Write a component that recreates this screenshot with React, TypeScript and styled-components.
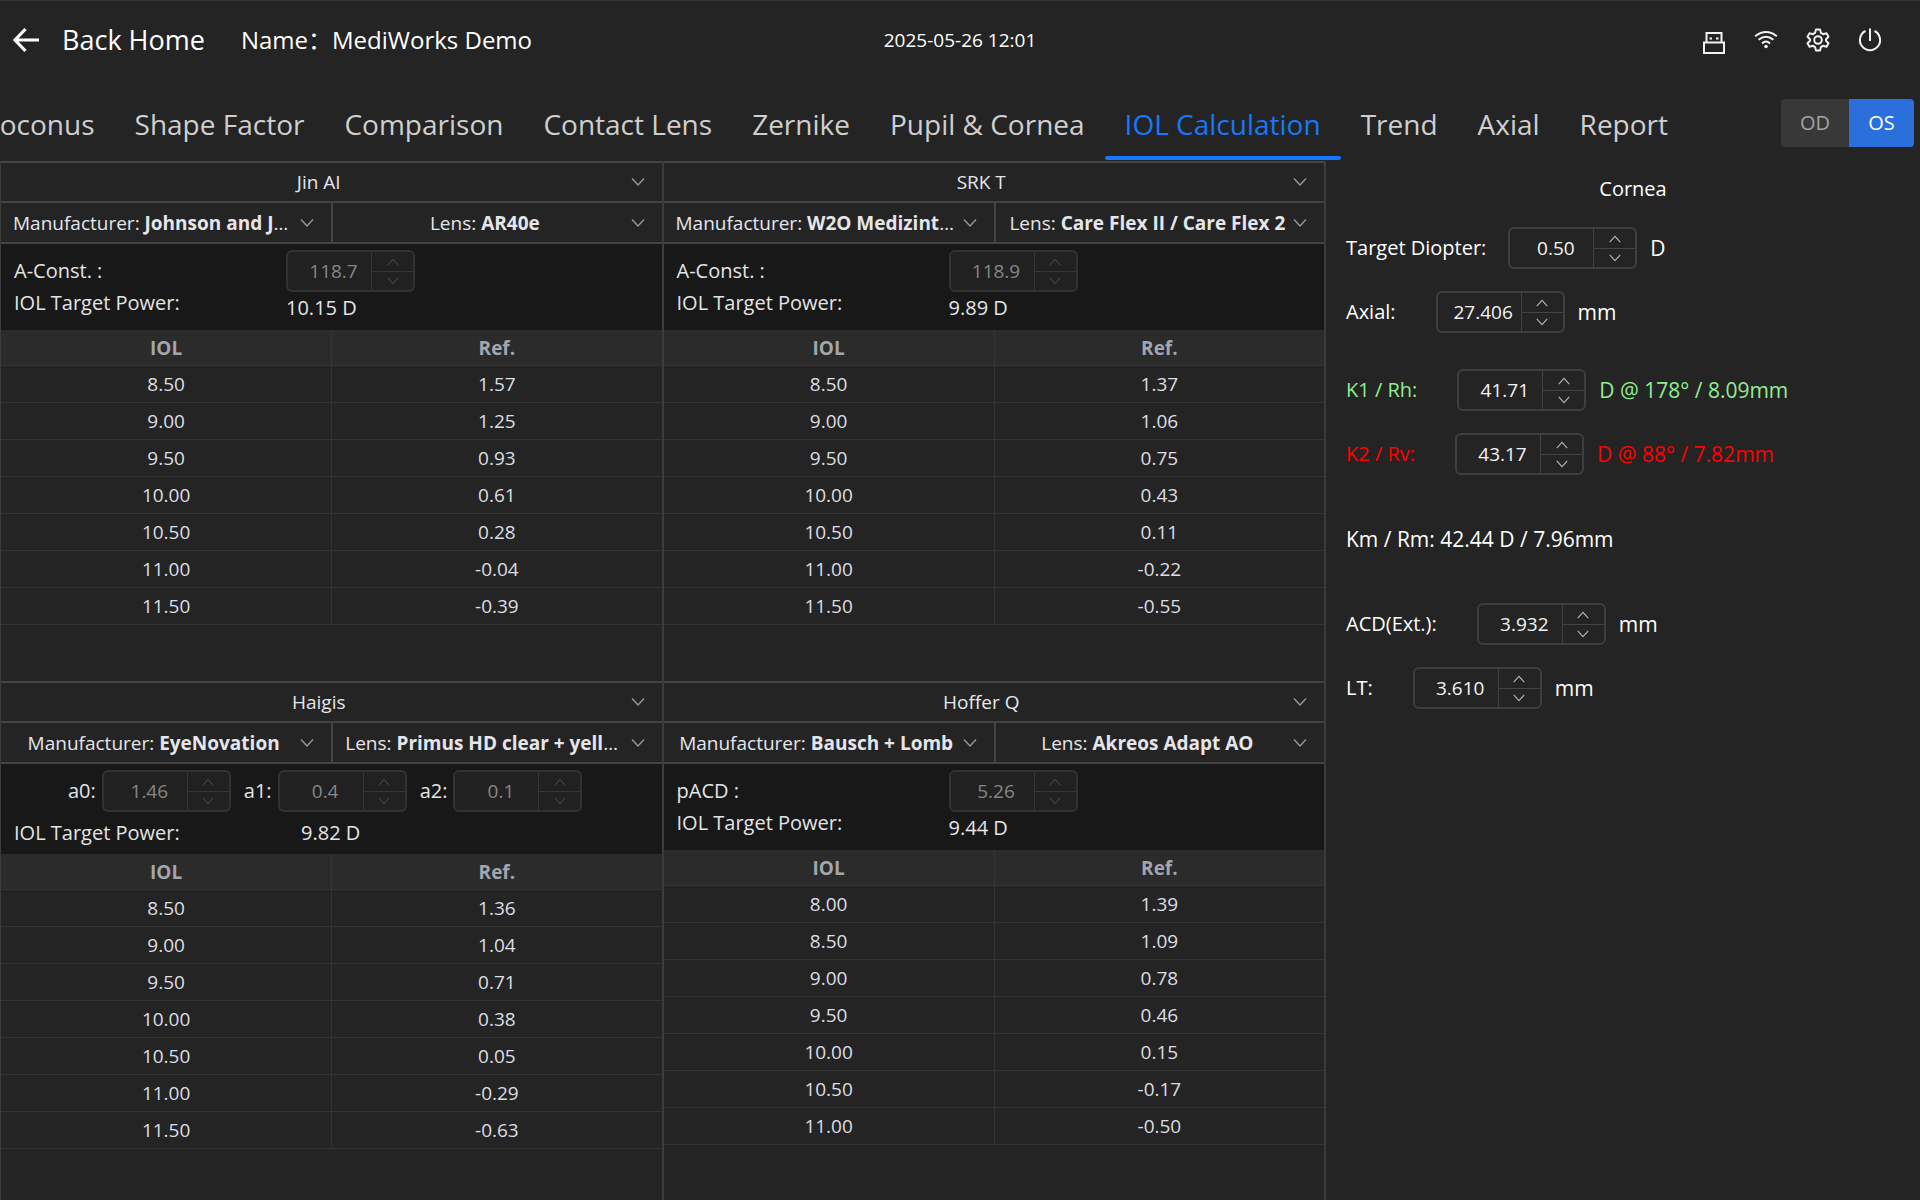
import React from 'react';
import styled, { createGlobalStyle } from 'styled-components';

const Global = createGlobalStyle`
  *, *::before, *::after { box-sizing: border-box; }
  body {
    margin: 0;
    background: #242424;
    color: #fff;
    font-family: "Open Sans", "Noto Sans CJK SC", sans-serif;
    font-size: 20px;
    line-height: 28px;
  }
  button, input, select { font: inherit; color: inherit; margin: 0; }
`;

const Page = styled.div`
  display: flex;
  flex-direction: column;
  min-height: 100vh;
  border-top: 1px solid #363636;
`;

const TopBar = styled.header`
  display: grid;
  grid-template-columns: minmax(0, 1fr) auto minmax(0, 1fr);
  align-items: center;
  height: 80px;
  padding-bottom: 2px;
`;

const TopLeft = styled.div`
  display: flex;
  align-items: center;
  gap: 36px;
  padding-left: 12px;
  font-size: 24px;
`;

const BackLink = styled.a`
  display: flex;
  align-items: center;
  gap: 22px;
  color: #fff;
  font-size: 27px;
  text-decoration: none;
`;

const Clock = styled.time`
  font-size: 19px;
`;

const TopIcons = styled.div`
  display: flex;
  justify-content: flex-end;
  gap: 24px;
  padding-right: 36px;
`;

const IconButton = styled.button`
  display: flex;
  padding: 0;
  border: 0;
  background: none;
  color: #f2f2f2;
`;

const TabRow = styled.div`
  display: flex;
  align-items: center;
  justify-content: space-between;
  height: 80px;
  padding-right: 6px;
`;

const Tabs = styled.nav`
  display: flex;
  justify-content: flex-end;
  flex: 0 1 1688px;
  min-width: 0;
  height: 80px;
  overflow: hidden;
`;

const Tab = styled.button<{ $active?: boolean }>`
  flex: none;
  height: 80px;
  padding: 6px 20px 0;
  border: 0;
  border-radius: 0;
  background: none;
  position: relative;
  color: ${p => (p.$active ? '#1677ff' : '#cfcfcf')};
  font-size: 28px;
  &::after {
    content: '';
    display: ${p => (p.$active ? 'block' : 'none')};
    position: absolute;
    left: 0;
    right: 0;
    bottom: 1px;
    height: 4px;
    border-radius: 2px;
    background: #1677ff;
  }
`;

const EyeSwitch = styled.div`
  display: flex;
  height: 48px;
  margin-top: 4px;
  border-radius: 4px;
  overflow: hidden;
`;

const EyeButton = styled.button<{ $active?: boolean }>`
  width: ${p => (p.$active ? 65 : 68)}px;
  padding: 0;
  border: 0;
  background: ${p => (p.$active ? '#2b6fdc' : '#383838')};
  color: ${p => (p.$active ? '#fff' : '#a3a3a3')};
`;

const Main = styled.main`
  flex: 1;
  display: grid;
  grid-template-columns: 1326fr 594fr;
`;

const Quadrants = styled.div`
  display: grid;
  grid-template-columns: 1fr 1fr;
  grid-template-rows: 520px 1fr;
  border-left: 1px solid #3c3c3c;
`;

const Panel = styled.section`
  display: flex;
  flex-direction: column;
  min-width: 0;
  border-right: 2px solid #3c3c3c;
`;

const PickerRow = styled.div<{ $title?: boolean }>`
  display: grid;
  grid-template-columns: repeat(${p => (p.$title ? 1 : 2)}, minmax(0, 1fr));
  height: ${p => (p.$title ? 42 : 41)}px;
  border-top: ${p => (p.$title ? 2 : 0)}px solid #444;
  border-bottom: 2px solid #444;
`;

const Picker = styled.button`
  display: flex;
  align-items: center;
  gap: 5px;
  min-width: 0;
  padding: 0 16px 0 12px;
  border: 0;
  background: none;
  color: #e4e6ec;
  font-size: 19px;
  & + & { border-left: 2px solid #444; }
`;

const PickerText = styled.span`
  flex: 1;
  overflow: hidden;
  text-overflow: ellipsis;
  white-space: nowrap;
  text-align: center;
`;

const Params = styled.div`
  padding: 6px 0 0 13px;
  background: #181818;
  color: #e4e4e4;
`;

const SingleParams = styled(Params)`
  display: grid;
  grid-template-columns: 272px 1fr;
  height: 86px;
`;

const Stack = styled.div`
  display: flex;
  flex-direction: column;
  align-items: flex-start;
`;

const ParamLabels = styled(Stack)`
  gap: 4px;
  padding-top: 7px;
`;

const ParamValues = styled(Stack)`
  gap: 2px;
`;

const TripleParams = styled(Params)`
  display: flex;
  flex-direction: column;
  gap: 7px;
  height: 90px;
`;

const TripleFields = styled.div`
  display: flex;
  gap: 13px;
  padding-left: 54px;
`;

const TripleField = styled.div`
  display: flex;
  align-items: center;
  gap: 6px;
`;

const TripleResult = styled.div`
  display: grid;
  grid-template-columns: 287px 1fr;
`;

const Spin = styled.div<{ $disabled?: boolean }>`
  display: grid;
  grid-template-columns: 1fr 42px;
  width: 129px;
  height: 42px;
  border: 2px solid ${p => (p.$disabled ? '#323232' : '#3e3e3e')};
  border-radius: 6px;
  background: ${p => (p.$disabled ? '#212121' : '#242424')};
  color: ${p => (p.$disabled ? '#868686' : '#f4f4f4')};
  overflow: hidden;
`;

const SpinInput = styled.input`
  width: 100%;
  min-width: 0;
  padding: 0 0 0 8px;
  border: 0;
  background: none;
  text-align: center;
  font-size: 19px;
  outline: none;
`;

const SpinButtons = styled.div<{ $disabled?: boolean }>`
  display: grid;
  grid-template-rows: 1fr 1fr;
  border-left: 1px solid ${p => (p.$disabled ? '#363636' : '#424242')};
  color: ${p => (p.$disabled ? '#444' : '#b4b4b4')};
  button + button { border-top: 1px solid ${p => (p.$disabled ? '#363636' : '#424242')}; }
`;

const SpinButton = styled.button`
  display: flex;
  align-items: center;
  justify-content: center;
  padding: 0;
  border: 0;
  background: none;
`;

const Table = styled.table`
  width: 100%;
  table-layout: fixed;
  border-collapse: separate;
  border-spacing: 0;
  font-size: 19px;
  th, td {
    height: 37px;
    padding: 0;
    text-align: center;
    border-bottom: 1px solid #333;
  }
  th { height: 36px; background: #2b2b2b; color: #a3a6ad; font-weight: 700; }
  td { color: #dcdee4; }
  th + th, td + td { border-left: 1px solid #333; }
`;

const Side = styled.aside`
  padding: 14px 0 14px 20px;
`;

const SideTitle = styled.h2`
  margin: 0 0 24px;
  font-size: 20px;
  font-weight: 400;
  text-align: center;
`;

const Measure = styled.div<{ $tone?: string; $gap?: number; $after?: number }>`
  display: flex;
  align-items: center;
  gap: ${p => p.$gap ?? 40}px;
  min-height: 42px;
  margin-bottom: ${p => p.$after ?? 22}px;
  color: ${p => p.$tone ?? '#fff'};
`;

const Reading = styled.div`
  display: flex;
  align-items: center;
  gap: 13px;
  font-size: 21px;
`;

const Chevron = ({ size = 16, up = false }: { size?: number; up?: boolean }) => (
  <svg width={size} height={size} viewBox="0 0 16 16" fill="none" stroke="currentColor" strokeWidth="1.3">
    <path d={up ? 'M2 11.5 8 5l6 6.5' : 'M2 4.5 8 11l6-6.5'} />
  </svg>
);

const PickArrow = styled.span`
  display: flex;
  flex: none;
  color: #9a9a9a;
`;

function NumberBox({ id, value, disabled }: { id: string; value: string; disabled?: boolean }) {
  return (
    <Spin $disabled={disabled}>
      <SpinInput id={id} defaultValue={value} disabled={disabled} inputMode="decimal" />
      <SpinButtons $disabled={disabled}>
        <SpinButton disabled={disabled} aria-label="Increase"><Chevron size={14} up /></SpinButton>
        <SpinButton disabled={disabled} aria-label="Decrease"><Chevron size={14} /></SpinButton>
      </SpinButtons>
    </Spin>
  );
}

type Formula = {
  name: string;
  maker: string;
  lens: string;
  constants: [string, string][];
  power: string;
  rows: [string, string][];
};

const formulas: Formula[] = [
  {
    name: 'Jin AI', maker: 'Johnson and Johnson', lens: 'AR40e',
    constants: [['A-Const. :', '118.7']], power: '10.15 D',
    rows: [['8.50', '1.57'], ['9.00', '1.25'], ['9.50', '0.93'], ['10.00', '0.61'], ['10.50', '0.28'], ['11.00', '-0.04'], ['11.50', '-0.39']],
  },
  {
    name: 'SRK T', maker: 'W2O Medizintechnik', lens: 'Care Flex II / Care Flex 2',
    constants: [['A-Const. :', '118.9']], power: '9.89 D',
    rows: [['8.50', '1.37'], ['9.00', '1.06'], ['9.50', '0.75'], ['10.00', '0.43'], ['10.50', '0.11'], ['11.00', '-0.22'], ['11.50', '-0.55']],
  },
  {
    name: 'Haigis', maker: 'EyeNovation', lens: 'Primus HD clear + yellow',
    constants: [['a0:', '1.46'], ['a1:', '0.4'], ['a2:', '0.1']], power: '9.82 D',
    rows: [['8.50', '1.36'], ['9.00', '1.04'], ['9.50', '0.71'], ['10.00', '0.38'], ['10.50', '0.05'], ['11.00', '-0.29'], ['11.50', '-0.63']],
  },
  {
    name: 'Hoffer Q', maker: 'Bausch + Lomb', lens: 'Akreos Adapt AO',
    constants: [['pACD :', '5.26']], power: '9.44 D',
    rows: [['8.00', '1.39'], ['8.50', '1.09'], ['9.00', '0.78'], ['9.50', '0.46'], ['10.00', '0.15'], ['10.50', '-0.17'], ['11.00', '-0.50']],
  },
];

function FormulaPanel({ f, index }: { f: Formula; index: number }) {
  const boxes = f.constants.map(([label, value], i) => ({ id: `const-${index}-${i}`, label, value }));
  return (
    <Panel>
      <PickerRow $title>
        <Picker><PickerText>{f.name}</PickerText><PickArrow><Chevron /></PickArrow></Picker>
      </PickerRow>
      <PickerRow>
        <Picker><PickerText>Manufacturer: <b>{f.maker}</b></PickerText><PickArrow><Chevron /></PickArrow></Picker>
        <Picker><PickerText>Lens: <b>{f.lens}</b></PickerText><PickArrow><Chevron /></PickArrow></Picker>
      </PickerRow>
      {boxes.length === 1 ? (
        <SingleParams>
          <ParamLabels>
            <label htmlFor={boxes[0].id}>{boxes[0].label}</label>
            <span>IOL Target Power:</span>
          </ParamLabels>
          <ParamValues>
            <NumberBox id={boxes[0].id} value={boxes[0].value} disabled />
            <span>{f.power}</span>
          </ParamValues>
        </SingleParams>
      ) : (
        <TripleParams>
          <TripleFields>
            {boxes.map(b => (
              <TripleField key={b.id}>
                <label htmlFor={b.id}>{b.label}</label>
                <NumberBox id={b.id} value={b.value} disabled />
              </TripleField>
            ))}
          </TripleFields>
          <TripleResult><span>IOL Target Power:</span><span>{f.power}</span></TripleResult>
        </TripleParams>
      )}
      <Table>
        <thead><tr><th>IOL</th><th>Ref.</th></tr></thead>
        <tbody>{f.rows.map(([iol, ref]) => <tr key={iol}><td>{iol}</td><td>{ref}</td></tr>)}</tbody>
      </Table>
    </Panel>
  );
}

const BackArrow = () => (
  <svg width="28" height="28" viewBox="0 0 28 28" fill="none" stroke="currentColor" strokeWidth="3.2">
    <path d="M13.5 3 3 14l10.500 11M3 14h24" />
  </svg>
);

const UsbIcon = () => (
  <svg width="28" height="28" viewBox="0 -1 28 28" fill="none" stroke="currentColor" strokeWidth="2">
    <path d="M6.500 15.500V6h15v9.500M4 15.500h20V26H4z" />
    <path d="M9.500 11.500h2.500M16 11.500h2.500" />
  </svg>
);

const WifiIcon = () => (
  <svg width="28" height="28" viewBox="0 0 28 28" fill="none" stroke="currentColor" strokeWidth="2">
    <path d="M3.200 10.200Q14 1.800 24.800 10.200M6.600 13.800Q14 7.600 21.400 13.800M10 17.400Q14 13.600 18 17.400" />
    <circle cx="14" cy="20.500" r="1.800" fill="currentColor" stroke="none" />
  </svg>
);

const GearIcon = () => (
  <svg width="28" height="28" viewBox="0 0 28 28" fill="none" stroke="currentColor" strokeWidth="2" strokeLinejoin="round">
    <path d="M12 3.500h4l1 3.500q1 .3 2 1.200l3.500-.9 2 3.400-2.500 2.500v1.600l2.500 2.500-2 3.400-3.500-.9q-1 .9-2 1.200l-1 3.500h-4l-1-3.500q-1-.3-2-1.200l-3.500.9-2-3.400L6 14.800v-1.600l-2.500-2.500 2-3.400 3.500.9q1-.9 2-1.200z" />
    <circle cx="14" cy="14" r="3.800" />
  </svg>
);

const PowerIcon = () => (
  <svg width="28" height="28" viewBox="0 0 28 28" fill="none" stroke="currentColor" strokeWidth="2">
    <path d="M14 2.500V15M9.500 5a10.100 10.100 0 1 0 9 0" />
  </svg>
);

const tabs = ['Keratoconus', 'Shape Factor', 'Comparison', 'Contact Lens', 'Zernike', 'Pupil & Cornea', 'IOL Calculation', 'Trend', 'Axial', 'Report'];

export default function App() {
  return (
    <>
      <Global />
      <Page>
        <TopBar>
          <TopLeft>
            <BackLink href="#home"><BackArrow />Back Home</BackLink>
            <span>Name：MediWorks Demo</span>
          </TopLeft>
          <Clock dateTime="2025-05-26T12:01">2025-05-26 12:01</Clock>
          <TopIcons>
            <IconButton aria-label="USB"><UsbIcon /></IconButton>
            <IconButton aria-label="Wi-Fi"><WifiIcon /></IconButton>
            <IconButton aria-label="Settings"><GearIcon /></IconButton>
            <IconButton aria-label="Power"><PowerIcon /></IconButton>
          </TopIcons>
        </TopBar>
        <TabRow>
          <Tabs>
            {tabs.map(t => <Tab key={t} $active={t === 'IOL Calculation'}>{t}</Tab>)}
          </Tabs>
          <EyeSwitch>
            <EyeButton>OD</EyeButton>
            <EyeButton $active>OS</EyeButton>
          </EyeSwitch>
        </TabRow>
        <Main>
          <Quadrants>
            {formulas.map((f, i) => <FormulaPanel key={f.name} f={f} index={i} />)}
          </Quadrants>
          <Side>
            <SideTitle>Cornea</SideTitle>
            <Measure $gap={22}>
              <label htmlFor="target">Target Diopter:</label>
              <Reading><NumberBox id="target" value="0.50" /><span>D</span></Reading>
            </Measure>
            <Measure $after={36}>
              <label htmlFor="axial">Axial:</label>
              <Reading><NumberBox id="axial" value="27.406" /><span>mm</span></Reading>
            </Measure>
            <Measure $tone="#90ee90">
              <label htmlFor="k1">K1 / Rh:</label>
              <Reading><NumberBox id="k1" value="41.71" /><span>D @ 178° / 8.09mm</span></Reading>
            </Measure>
            <Measure $tone="#ff0000" $after={43}>
              <label htmlFor="k2">K2 / Rv:</label>
              <Reading><NumberBox id="k2" value="43.17" /><span>D @ 88° / 7.82mm</span></Reading>
            </Measure>
            <Measure $after={43}><Reading>Km / Rm: 42.44 D / 7.96mm</Reading></Measure>
            <Measure>
              <label htmlFor="acd">ACD(Ext.):</label>
              <Reading><NumberBox id="acd" value="3.932" /><span>mm</span></Reading>
            </Measure>
            <Measure>
              <label htmlFor="lt">LT:</label>
              <Reading><NumberBox id="lt" value="3.610" /><span>mm</span></Reading>
            </Measure>
          </Side>
        </Main>
      </Page>
    </>
  );
}
